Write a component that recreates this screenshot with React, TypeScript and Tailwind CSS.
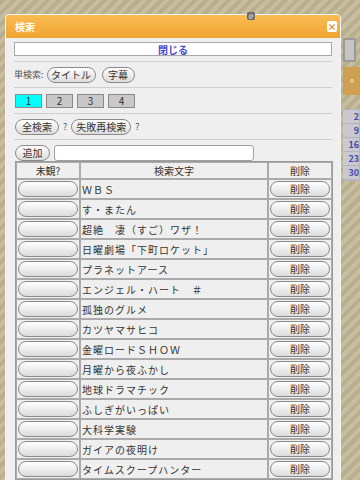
import React from 'react'

const rows = [
  'ＷＢＳ',
  'す・またん',
  '超絶　凄（すご）ワザ！',
  '日曜劇場「下町ロケット」',
  'プラネットアース',
  'エンジェル・ハート　＃',
  '孤独のグルメ',
  'カツヤマサヒコ',
  '金曜ロードＳＨＯＷ',
  '月曜から夜ふかし',
  '地球ドラマチック',
  'ふしぎがいっぱい',
  '大科学実験',
  'ガイアの夜明け',
  'タイムスクープハンター',
]

const font = "font-['Noto_Sans_CJK_JP','Noto_Sans',sans-serif]"

const Pill = ({ children, className = '' }: { children?: React.ReactNode; className?: string }) => (
  <button
    className={`flex items-center justify-center rounded-full border border-[#8a8a8a] bg-gradient-to-b from-white to-[#dcdcdc] text-[10px] leading-none text-[#333] ${className}`}
  >
    {children}
  </button>
)

const Rule = () => <div className="h-px bg-[#cfcfcf]" />

export default function App() {
  return (
    <div
      className={`relative h-[480px] w-[360px] overflow-hidden bg-[repeating-linear-gradient(135deg,#b9ae8e_0px,#b9ae8e_4px,#c7bd9f_4px,#c7bd9f_8px)] ${font}`}
    >
      {/* page behind the dialog */}
      <div className="absolute left-[343px] top-[38px] h-[24px] w-[13px] border-2 border-[#9a9a9a] bg-[#c4c4c4]" />
      <div className="absolute left-[343px] top-[67px] flex h-[28px] w-[17px] items-center justify-center bg-[#cf9f52]">
        <div className="h-[4px] w-[4px] rounded-full border border-[#f0e0c0]" />
      </div>
      <div className="absolute left-[343px] top-[109px] flex w-[17px] flex-col items-end gap-px bg-[#b5b5bd] pb-[2px] pr-[1px] pt-[1px]">
        {['2', '9', '16', '23', '30'].map((d) => (
          <div key={d} className="h-[13px] w-full bg-[#c9c9cf] text-right text-[9px] font-bold leading-[13px] text-[#4646b0]">
            {d}
          </div>
        ))}
      </div>

      {/* dialog */}
      <div className="absolute left-[5px] top-[14px] w-[336px] rounded-t-[4px] border border-[#f4f4f4] bg-[#efefef] pb-4">
        <div className="flex h-[23px] items-center justify-between rounded-t-[3px] bg-gradient-to-b from-[#f9bc52] to-[#f0a431] pl-[9px] pr-[3px]">
          <span className="text-[10px] font-bold text-white">検索</span>
          <div className="flex h-[11px] w-[10px] items-center justify-center rounded-[2px] bg-white text-[9px] font-bold leading-none text-[#e08a20]">
            ×
          </div>
        </div>

        <div className="px-2">
          <div className="mt-[4px] flex h-[14px] items-center justify-center border border-[#a8a8a8] bg-white text-[10px] font-bold text-[#4a4ad0]">
            閉じる
          </div>
          <div className="mt-[5px]">
            <Rule />
          </div>

          <div className="flex h-[25px] items-center gap-[6px] text-[9px] text-[#555]">
            <span>単検索:</span>
            <Pill className="ml-[-3px] h-[16px] w-[49px]">タイトル</Pill>
            <Pill className="h-[16px] w-[33px]">字幕</Pill>
          </div>
          <Rule />

          <div className="flex h-[25px] items-center gap-[4px] pl-px">
            {['1', '2', '3', '4'].map((n, i) => (
              <div
                key={n}
                className={`flex h-[14px] w-[27px] items-center justify-center border border-[#8a8a8a] text-[10px] text-[#333] ${i === 0 ? 'bg-[#00ffff]' : 'bg-[#c8c8c8]'}`}
              >
                {n}
              </div>
            ))}
          </div>
          <Rule />

          <div className="flex h-[25px] items-center gap-[4px] pl-px text-[9px] text-[#555]">
            <Pill className="h-[16px] w-[44px]">全検索</Pill>
            <span>?</span>
            <Pill className="h-[16px] w-[60px]">失敗再検索</Pill>
            <span>?</span>
          </div>
          <Rule />

          <div className="mt-[5px] flex h-[16px] items-center gap-[4px] pl-px">
            <Pill className="h-[16px] w-[35px]">追加</Pill>
            <div className="h-[16px] w-[200px] rounded-[3px] border border-[#a0a0a0] bg-white" />
          </div>

          <table className="ml-px w-[318px] table-fixed border-separate border-spacing-0 border border-[#9a9a9a] text-[10px] text-[#333]">
            <colgroup>
              <col className="w-[64px]" />
              <col />
              <col className="w-[64px]" />
            </colgroup>
            <thead>
              <tr className="h-[16px]">
                <th className="border border-[#aaa] font-normal">未観?</th>
                <th className="border border-[#aaa] font-normal">検索文字</th>
                <th className="border border-[#aaa] font-normal">削除</th>
              </tr>
            </thead>
            <tbody>
              {rows.map((r) => (
                <tr key={r} className="h-[20px]">
                  <td className="border border-[#aaa] px-px">
                    <Pill className="h-[16px] w-full" />
                  </td>
                  <td className="overflow-hidden whitespace-nowrap border border-[#aaa] pl-px tracking-[1px]">{r}</td>
                  <td className="border border-[#aaa] px-px">
                    <Pill className="h-[16px] w-full">削除</Pill>
                  </td>
                </tr>
              ))}
            </tbody>
          </table>
        </div>
      </div>

      <div className="absolute left-[247px] top-[12px] flex h-[8px] w-[8px] items-center justify-center rounded-[2px] bg-[#666] text-[6px] leading-none text-white">
        @
      </div>
    </div>
  )
}
